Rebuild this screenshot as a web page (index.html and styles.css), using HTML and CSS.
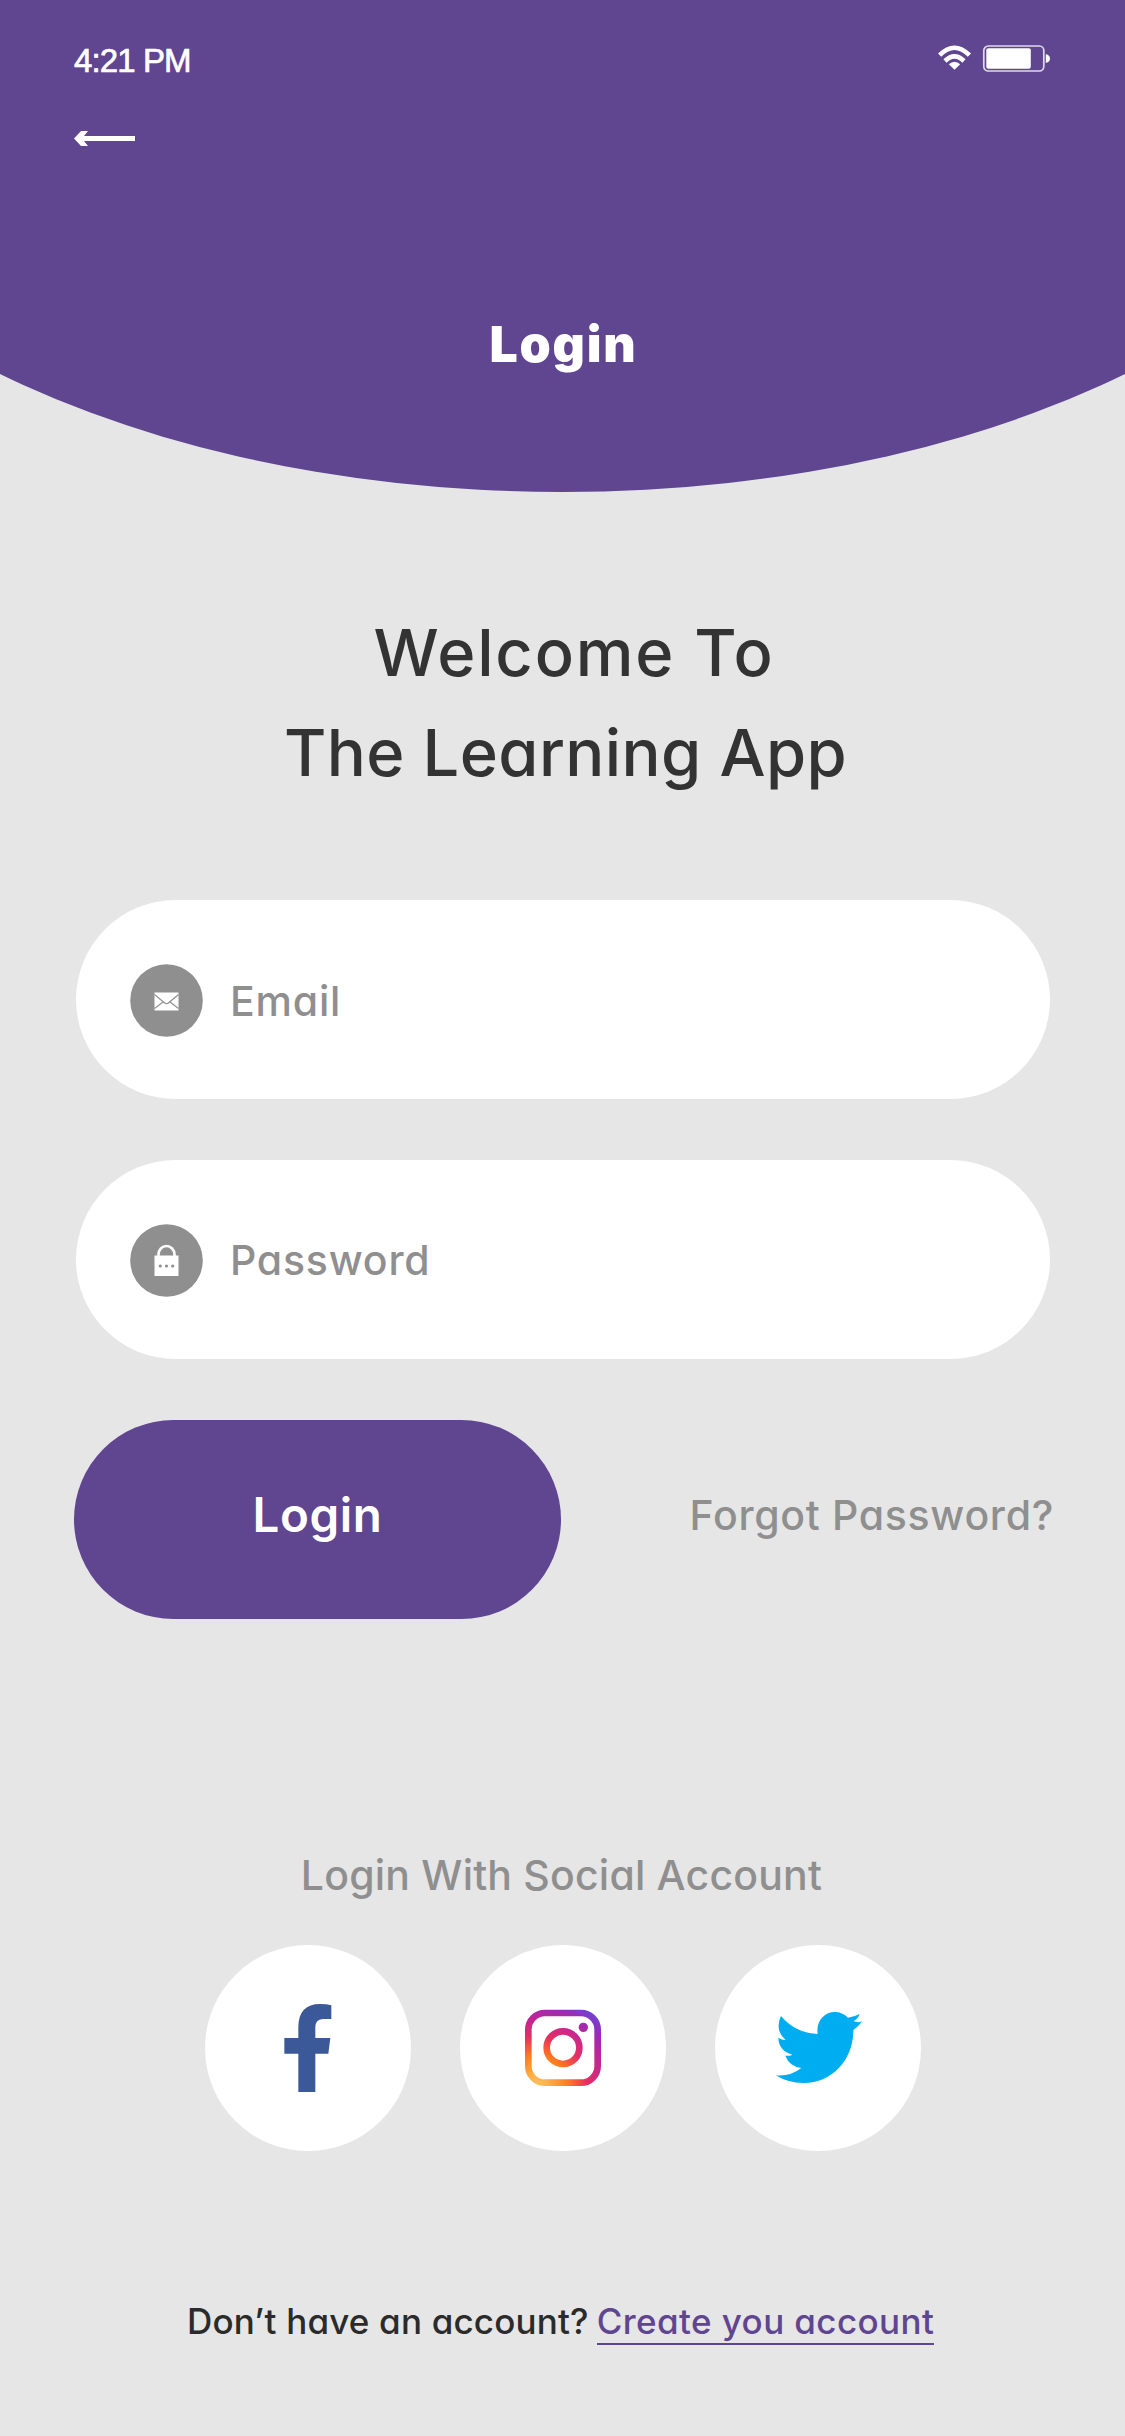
FILE: index.html
```html
<!DOCTYPE html>
<html lang="en">
<head>
<meta charset="utf-8">
<title>Login</title>
<link rel="stylesheet" href="styles.css">
</head>
<body>
<div class="screen">
  <header class="hero">
    <div class="status">
      <span class="time">4:21 PM</span>
      <svg class="signals" width="112" height="28" viewBox="0 0 112 28">
        <g fill="none" stroke="#fff" stroke-width="4.6">
          <path d="M1.6 11.2 Q16.5 -3.8 31.4 11.2"/>
          <path d="M7 17 Q16.5 7.800 26 17"/>
        </g>
        <path d="M10.800 20.200 Q16.500 15.200 22.200 20.200 L16.500 25.800Z" fill="#fff"/>
        <rect x="45.800" y="2" width="60" height="25" rx="4.500" fill="none" stroke="#fff" stroke-opacity=".8" stroke-width="1.700"/>
        <rect x="48.300" y="4.300" width="44.500" height="20.500" rx="2" fill="#fff"/>
        <path d="M107.800 10 Q112 11 112 14.500 Q112 18 107.800 19Z" fill="#fff"/>
      </svg>
    </div>
    <svg class="back" width="61" height="15" viewBox="0 0 61 15"><path d="M0 7.500 7 0H14L10 5H61V10H10L14 15H7Z" fill="#fff"/></svg>
    <h1 class="title">Login</h1>
  </header>
  <main class="content">
    <h2 class="welcome"><span class="welcome-to">Welcome To</span><span class="app-name">The Learning App</span></h2>
    <div class="field">
      <svg class="badge" width="73" height="73" viewBox="0 0 73 73">
        <circle cx="36.500" cy="36.500" r="36.300" fill="#8f8f8f"/>
        <rect x="24.500" y="28.500" width="24" height="18" fill="#fff"/>
        <path d="M24.500 30.500 34 38.500Q36.500 41 39 38.500L48.500 30.500M24.500 44.500 33 38M48.500 44.500 40 38" fill="none" stroke="#8f8f8f" stroke-width="1.100"/>
      </svg>
      <span class="label">Email</span>
    </div>
    <div class="field password-field">
      <svg class="badge" width="73" height="73" viewBox="0 0 73 73">
        <circle cx="36.500" cy="36.500" r="36.300" fill="#8f8f8f"/>
        <path d="M28.500 32V30.500A8 8.500 0 0 1 44.500 30.500V32" fill="none" stroke="#fff" stroke-width="2.600"/>
        <rect x="24.500" y="31.500" width="24" height="20.500" fill="#fff"/>
        <g fill="#8f8f8f"><circle cx="30.300" cy="42" r="1.600"/><circle cx="36.500" cy="42" r="1.600"/><circle cx="42.700" cy="42" r="1.600"/></g>
      </svg>
      <span class="label">Password</span>
    </div>
    <div class="actions">
      <div class="button">Login</div>
      <span class="forgot">Forgot Password?</span>
    </div>
    <p class="social-title">Login With Social Account</p>
    <div class="socials">
      <div class="social">
        <svg width="110" height="110" viewBox="0 0 330 330"><path transform="translate(51 -9)" d="M184 46V87H158Q136 88 136 112V144H181L175 191H136V306H85V191H43V144H85V112C85 65 108 42 150 42Q170 42 184 46Z" fill="#3b5998"/></svg>
      </div>
      <div class="social">
        <svg width="110" height="110" viewBox="0 0 330 330">
          <defs><radialGradient id="ig" gradientUnits="userSpaceOnUse" cx="80" cy="290" r="290">
            <stop offset="0" stop-color="#ffc25a"/><stop offset=".12" stop-color="#ffb04a"/><stop offset=".32" stop-color="#ff7d1e"/><stop offset=".52" stop-color="#e62e62"/><stop offset=".72" stop-color="#bd259b"/><stop offset=".84" stop-color="#962bbd"/><stop offset="1" stop-color="#5f50d6"/>
          </radialGradient></defs>
          <g transform="translate(6 -9)">
            <rect x="55" y="69" width="208" height="209" rx="50" fill="none" stroke="url(#ig)" stroke-width="20"/>
            <circle cx="159" cy="173" r="49" fill="none" stroke="url(#ig)" stroke-width="20"/>
            <circle cx="220" cy="112" r="14" fill="url(#ig)"/>
          </g>
        </svg>
      </div>
      <div class="social">
        <svg width="110" height="110" viewBox="0 0 330 330"><path transform="translate(-9 -9)" d="M299 72Q296 83 281 94Q296 99 306 94Q297 109 280 120C281 205 220 279 130 279Q84 279 47 256Q91 260 124 234Q88 229 76 197Q88 199 97 194Q56 182 55 143Q65 150 77 150Q43 121 63 78Q106 129 173 132C167 94 193 66 224 66Q248 66 264 83Q284 80 299 72Z" fill="#00adf0"/></svg>
      </div>
    </div>
    <p class="signup"><span class="question">Don’t have an account?</span><a class="create">Create you account</a></p>
  </main>
</div>
</body>
</html>
```
FILE: styles.css
```css
* { box-sizing: border-box; margin: 0; padding: 0; }
body { background: #e6e6e6; }
.screen {
  width: 1125px;
  height: 2436px;
  overflow: hidden;
  background: #e6e6e6;
  font-family: Inter, "Open Sans", sans-serif;
  font-feature-settings: "cv11";
  font-weight: 500;
  color: #333;
  white-space: nowrap;
}
.hero {
  height: 492px;
  padding: 43px 75px 0 74px;
  background: #604591;
  clip-path: ellipse(850px 471px at 50% 21px);
  color: #fff;
}
.status { display: flex; justify-content: space-between; height: 88px; }
.time {
  font: 33px/35px "Liberation Sans", Arial, sans-serif;
  letter-spacing: -.9px;
  -webkit-text-stroke: .7px #fff;
}
.signals { margin-top: 1px; }
.back { display: block; }
.title { margin-top: 168px; padding-left: 3px; text-align: center; font-size: 50px; line-height: 60px; font-weight: 900; letter-spacing: 1.800px; }
.content { padding: 0 75px; }
.welcome { display: flex; flex-direction: column; align-items: center; padding-top: 111px; font-size: 65px; line-height: 100px; font-weight: 500; }
.welcome-to { padding-left: 23px; letter-spacing: 1.800px; }
.app-name { padding-left: 6px; letter-spacing: .4px; }
.field {
  display: flex;
  align-items: center;
  gap: 27px;
  width: 973.500px;
  height: 199px;
  margin: 97px 0 0 1px;
  padding-left: 54px;
  border-radius: 100px;
  background: #fff;
  color: #8f8f8f;
  font-size: 41px;
}
.badge { margin-top: 1px; }
.label { padding-top: 2px; letter-spacing: .8px; }
.password-field { margin-top: 61px; }
.password-field .label { padding-top: 0; }
.actions { display: flex; align-items: center; justify-content: space-between; height: 199px; margin: 61px -4px 0 -1px; }
.button { width: 487px; height: 199px; border-radius: 100px; background: #604591; color: #fff; text-align: center; font-size: 47.500px; line-height: 190px; font-weight: 600; letter-spacing: .6px; }
.forgot { padding-bottom: 10px; color: #8f8f8f; font-size: 41px; letter-spacing: .7px; }
.social-title { margin-top: 232px; padding-right: 2px; text-align: center; color: #8f8f8f; font-size: 41px; line-height: 48px; letter-spacing: .2px; }
.socials { display: flex; gap: 49px; margin: 46px 0 0 130px; }
.social { display: flex; align-items: center; justify-content: center; width: 206px; height: 206px; border-radius: 50%; background: #fff; }
.signup { display: flex; gap: 8px; margin: 149px 0 0 112px; font-size: 35px; line-height: 43px; color: #2b2b2b; }
.question { letter-spacing: .18px; }
.create { color: #604591; letter-spacing: .4px; border-bottom: 2px solid #604591; }
```
